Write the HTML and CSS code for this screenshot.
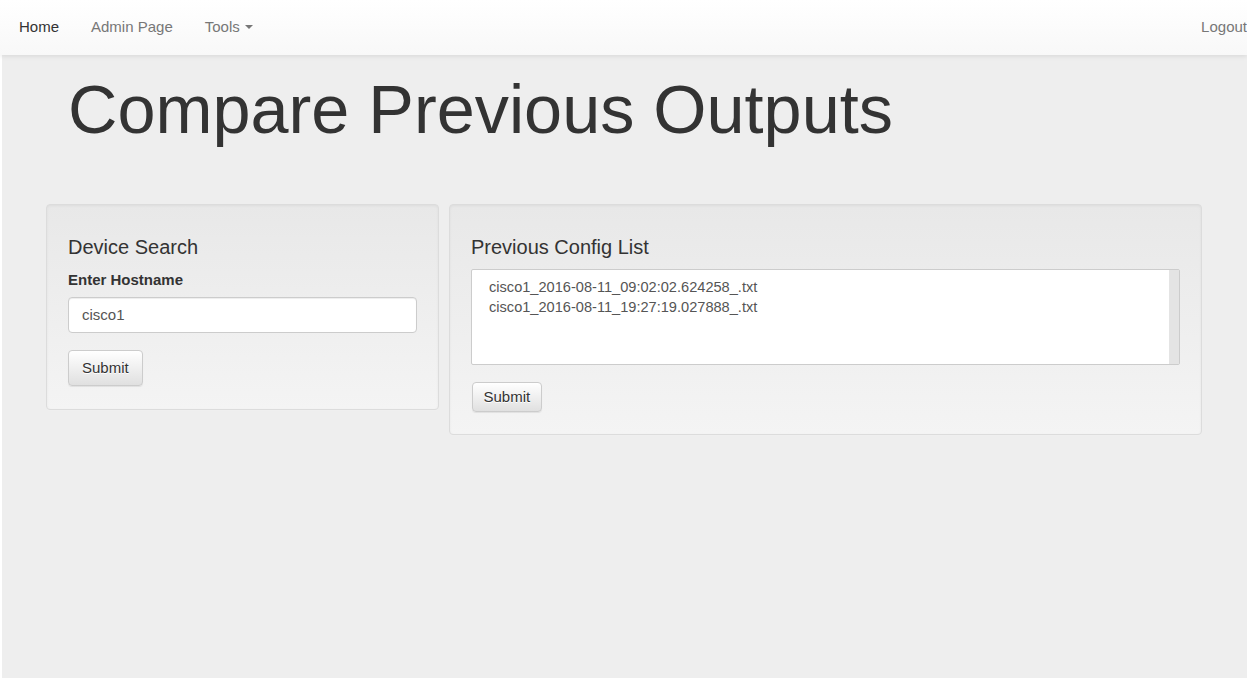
FILE: index.html
```html
<!DOCTYPE html>
<html lang="en">
<head>
<meta charset="utf-8">
<title>Compare Previous Outputs</title>
<link rel="stylesheet" href="styles.css">
</head>
<body>
<nav class="navbar">
  <ul class="nav-left">
    <li><a class="nav-link active" href="#">Home</a></li>
    <li><a class="nav-link" href="#">Admin Page</a></li>
    <li><a class="nav-link" href="#">Tools <span class="caret"></span></a></li>
  </ul>
  <a class="nav-link logout" href="#">Logout</a>
</nav>
<main class="jumbotron">
  <h1 class="page-title">Compare Previous Outputs</h1>
  <div class="row">
    <section class="well well-left">
      <h4 class="well-title">Device Search</h4>
      <label class="field-label" for="host">Enter Hostname</label>
      <div class="input-box" id="host">cisco1</div>
      <button class="btn btn-lg" type="button">Submit</button>
    </section>
    <section class="well well-right">
      <h4 class="well-title">Previous Config List</h4>
      <div class="listbox">
        <div class="options">
          <div class="option">cisco1_2016-08-11_09:02:02.624258_.txt</div>
          <div class="option">cisco1_2016-08-11_19:27:19.027888_.txt</div>
        </div>
        <div class="track"></div>
      </div>
      <button class="btn btn-sm" type="button">Submit</button>
    </section>
  </div>
</main>
</body>
</html>
```
FILE: styles.css
```css
html, body {
  margin: 0;
  padding: 0;
  height: 100%;
  background: #fff;
  font-family: "Liberation Sans", Arial, Helvetica, sans-serif;
  font-size: 15px;
  color: #333;
}

.navbar {
  position: relative;
  z-index: 2;
  display: flex;
  align-items: center;
  justify-content: space-between;
  height: 55px;
  padding-left: 3px;
  background: linear-gradient(to bottom, #ffffff 0%, #f8f8f8 100%);
  box-shadow: 0 1px 5px rgba(0, 0, 0, 0.1);
}

.nav-left {
  display: flex;
  list-style: none;
  margin: 0;
  padding: 0;
}

.nav-link {
  display: flex;
  align-items: center;
  box-sizing: border-box;
  padding: 0 16px 2px;
  height: 55px;
  color: #777;
  text-decoration: none;
  font-size: 15px;
}

.nav-link.active {
  color: #333;
}

.nav-link.logout {
  padding: 0 0 2px;
  margin-right: 0;
}

.caret {
  display: inline-block;
  width: 0;
  height: 0;
  margin-left: 5px;
  border-top: 4px solid #777;
  border-left: 4px solid transparent;
  border-right: 4px solid transparent;
}

.jumbotron {
  margin-left: 2px;
  height: calc(100% - 55px);
  background: #eee;
  padding-top: 17px;
  box-sizing: border-box;
}

.page-title {
  margin: 0 0 0 66px;
  font-size: 68.4px;
  font-weight: 400;
  line-height: 75px;
  color: #333;
}

.row {
  display: grid;
  grid-template-columns: 393px 753px;
  gap: 10px;
  align-items: start;
  margin: 57px 0 0 44px;
}

.well {
  box-sizing: border-box;
  padding: 21px 21px 22px;
  border: 1px solid #dcdcdc;
  border-radius: 4px;
  background: linear-gradient(to bottom, #e8e8e8 0%, #f4f4f4 100%);
  box-shadow: inset 0 1px 3px rgba(0, 0, 0, 0.05), 0 1px 0 rgba(255, 255, 255, 0.1);
}

.well-left {
  padding-bottom: 23px;
}

.well-title {
  margin: 10px 0 11px;
  font-size: 20px;
  font-weight: 400;
  line-height: 22px;
  color: #333;
}

.field-label {
  display: block;
  margin-bottom: 7px;
  font-weight: 700;
  font-size: 15px;
  line-height: 21px;
}

.input-box {
  box-sizing: border-box;
  height: 36px;
  padding: 7px 13px;
  line-height: 20px;
  font-size: 15px;
  color: #555;
  background: #fff;
  border: 1px solid #ccc;
  border-radius: 4px;
  box-shadow: inset 0 1px 1px rgba(0, 0, 0, 0.075);
  margin-bottom: 17px;
}

.btn {
  display: block;
  box-sizing: border-box;
  font-family: inherit;
  font-size: 15px;
  line-height: 20px;
  color: #333;
  border: 1px solid #ccc;
  border-radius: 4px;
  background: linear-gradient(to bottom, #ffffff 0%, #e0e0e0 100%);
  text-shadow: 0 1px 0 #fff;
  box-shadow: inset 0 1px 0 rgba(255, 255, 255, 0.15), 0 1px 1px rgba(0, 0, 0, 0.075);
  cursor: pointer;
}

.btn-lg {
  height: 36px;
  padding: 7px 13px;
}

.btn-sm {
  height: 30px;
  padding: 4px 10.5px;
  margin-left: 1px;
}

.listbox {
  display: flex;
  height: 96px;
  box-sizing: border-box;
  border: 1px solid #ccc;
  border-radius: 2px;
  background: #fff;
  margin-bottom: 17px;
}

.options {
  flex: 1;
  padding: 7px 17px;
}

.option {
  font-size: 14.6px;
  line-height: 20px;
  color: #555;
  white-space: nowrap;
}

.track {
  width: 10px;
  background: #e4e4e4;
}
```
